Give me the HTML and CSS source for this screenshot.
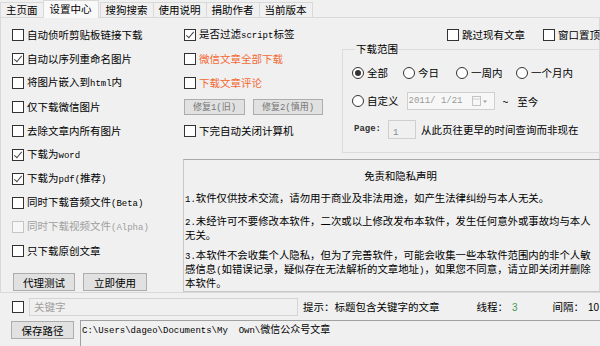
FILE: index.html
```html
<!DOCTYPE html>
<html lang="zh-CN">
<head>
    <meta charset="UTF-8">
    <title>设置中心</title>
    <link rel="stylesheet" href="styles.css">
</head>
<body>

    <div class="tabs">
        <span class="tab">主页面</span>
        <span class="tab active">设置中心</span>
        <span class="tab">搜狗搜索</span>
        <span class="tab">使用说明</span>
        <span class="tab">捐助作者</span>
        <span class="tab">当前版本</span>
    </div>

    <div class="panel">
        <!-- 左列 -->
        <div class="col-left">
            <label class="chk"><span class="box"></span><span>自动侦听剪贴板链接下载</span></label>
            <label class="chk"><span class="box on"></span><span>自动以序列重命名图片</span></label>
            <label class="chk"><span class="box"></span><span>将图片嵌入到<span class="en">html</span>内</span></label>
            <label class="chk"><span class="box"></span><span>仅下载微信图片</span></label>
            <label class="chk"><span class="box"></span><span>去除文章内所有图片</span></label>
            <label class="chk"><span class="box on"></span><span>下载为<span class="en">word</span></span></label>
            <label class="chk"><span class="box on"></span><span>下载为<span class="en">pdf(</span>推荐<span class="en">)</span></span></label>
            <label class="chk"><span class="box"></span><span>同时下载音频文件<span class="en">(Beta)</span></span></label>
            <label class="chk disabled"><span class="box"></span><span>同时下载视频文件<span class="en">(Alpha)</span></span></label>
            <label class="chk"><span class="box"></span><span>只下载原创文章</span></label>
            <div class="btn-row">
                <button class="btn-proxy">代理测试</button>
                <button class="btn-use">立即使用</button>
            </div>
        </div>

        <div class="col-right">
            <div class="upper">
                <!-- 中列 -->
                <div class="col-mid">
                    <label class="chk"><span class="box on"></span><span>是否过滤<span class="en">script</span>标签</span></label>
                    <label class="chk warn"><span class="box"></span><span>微信文章全部下载</span></label>
                    <label class="chk warn"><span class="box"></span><span>下载文章评论</span></label>
                    <div class="fix-row">
                        <button class="btn-fix1">修复<span class="en">1(</span>旧<span class="en">)</span></button>
                        <button class="btn-fix2">修复<span class="en">2(</span>慎用<span class="en">)</span></button>
                    </div>
                    <label class="chk"><span class="box"></span><span>下完自动关闭计算机</span></label>
                </div>

                <!-- 下载范围 -->
                <div class="col-range">
                    <div class="top-opts">
                        <label class="chk"><span class="box"></span><span>跳过现有文章</span></label>
                        <label class="chk"><span class="box"></span><span>窗口置顶</span></label>
                    </div>
                    <fieldset class="range">
                        <legend>下载范围</legend>
                        <div class="range-row">
                            <label class="rad"><span class="radio on"></span><span>全部</span></label>
                            <label class="rad"><span class="radio"></span><span>今日</span></label>
                            <label class="rad"><span class="radio"></span><span>一周内</span></label>
                            <label class="rad"><span class="radio"></span><span>一个月内</span></label>
                        </div>
                        <div class="range-row2">
                            <label class="rad"><span class="radio"></span><span>自定义</span></label>
                            <div class="date-box">
                                <span class="en">2011/ 1/21</span>
                                <svg class="cal" width="16" height="11" viewBox="0 0 16 11">
                                    <rect x="0.5" y="0.5" width="8" height="9" fill="#f7f7f7" stroke="#c4c4c4"/>
                                    <line x1="1" y1="3" x2="8" y2="3" stroke="#d0d0d0"/>
                                    <path d="M11 4.5 L15 4.5 L13 7 Z" fill="#a0a0a0"/>
                                </svg>
                            </div>
                            <span class="tilde">~</span>
                            <span class="until">至今</span>
                        </div>
                        <div class="range-row2">
                            <span class="page-label en">Page:</span>
                            <div class="page-box"><span class="en">1</span></div>
                            <span class="page-tip">从此页往更早的时间查询而非现在</span>
                        </div>
                    </fieldset>
                </div>
            </div>

            <div class="notice">
                <div class="notice-title">免责和隐私声明</div>
                <p><span class="en">1.</span>软件仅供技术交流，请勿用于商业及非法用途，如产生法律纠纷与本人无关。</p>
                <p><span class="en">2.</span>未经许可不要修改本软件，二次或以上修改发布本软件，发生任何意外或事故均与本人<br>无关。</p>
                <p><span class="en">3.</span>本软件不会收集个人隐私，但为了完善软件，可能会收集一些本软件范围内的非个人敏<br>感信息<span class="en">(</span>如错误记录，疑似存在无法解析的文章地址<span class="en">)</span>，如果您不同意，请立即关闭并删除<br>本软件。</p>
            </div>
        </div>
    </div>

    <div class="kw-row">
        <span class="box"></span>
        <div class="kw-input">关键字</div>
        <span class="kw-tip">提示：标题包含关键字的文章</span>
        <span class="stat">线程：<b class="num green">3</b></span>
        <span class="stat">间隔：<b class="num">10</b></span>
    </div>

    <div class="path-row">
        <button class="btn-path">保存路径</button>
        <div class="path-box"><span class="en">C:\Users\dageo\Documents\My&nbsp; Own\</span>微信公众号文章</div>
    </div>

</body>
</html>
```

FILE: styles.css
```css
* {
    box-sizing: border-box;
}
body {
    margin: 0;
    width: 600px;
    height: 346px;
    overflow: hidden;
    background: #f0f0f0;
    font-family: "Noto Sans CJK SC", sans-serif;
    font-size: 10.5px;
    color: #000;
}
.en {
    font-family: "Liberation Mono", "Noto Sans CJK SC", monospace;
    font-size: 9px;
}

/* 选项卡 */
.tabs {
    display: flex;
    align-items: flex-end;
    height: 17px;
}
.tab {
    height: 15px;
    line-height: 14px;
    padding: 0 5px;
    margin-right: -1px;
    border: 1px solid #d9d9d9;
    border-bottom: none;
    background: #f0f0f0;
    white-space: nowrap;
}
.tab.active {
    position: relative;
    z-index: 1;
    height: 18px;
    line-height: 16px;
    margin: 0 1px -1px 0;
    padding: 0 6px;
    background: #f9f9f9;
}

.panel {
    display: flex;
    height: 276px;
    padding: 5px 0 0 11px;
    border: 1px solid #d9d9d9;
    background: #f0f0f0;
}

/* 复选框 / 单选框 */
.chk, .rad {
    display: flex;
    align-items: center;
    height: 24px;
    line-height: 14px;
    white-space: nowrap;
}
.box {
    flex: none;
    position: relative;
    width: 12px;
    height: 12px;
    margin-right: 3px;
    border: 1px solid #333;
    background: #fff;
}
.box.on::after {
    content: "";
    position: absolute;
    left: 3px;
    top: 0;
    width: 3px;
    height: 7px;
    border: solid #444;
    border-width: 0 1px 1px 0;
    transform: rotate(40deg);
}
.chk.disabled {
    color: #a0a0a0;
}
.chk.disabled .box {
    border-color: #c5c5c5;
    background: #f7f7f7;
}
.chk.warn {
    color: #f26a35;
}
.radio {
    flex: none;
    position: relative;
    width: 12px;
    height: 12px;
    margin-right: 3px;
    border: 1px solid #333;
    border-radius: 50%;
    background: #fff;
}
.radio.on::after {
    content: "";
    position: absolute;
    left: 2px;
    top: 2px;
    width: 6px;
    height: 6px;
    border-radius: 50%;
    background: #333;
}

button {
    height: 18px;
    padding: 0;
    font: inherit;
    color: #000;
    background: #e1e1e1;
    border: 1px solid #adadad;
    white-space: nowrap;
}

.col-left {
    flex: none;
    width: 172px;
    display: flex;
    flex-direction: column;
}
.btn-row {
    display: flex;
    gap: 8px;
    margin-top: 10px;
    padding-left: 1px;
}
.btn-proxy {
    width: 62px;
}
.btn-use {
    width: 64px;
}

.col-right {
    flex: 1;
    min-width: 0;
    display: flex;
    flex-direction: column;
}
.upper {
    display: flex;
}
.col-mid {
    flex: none;
    width: 158px;
}
.fix-row {
    display: flex;
    align-items: center;
    gap: 8px;
    height: 24px;
}
.fix-row button {
    height: 16px;
    font-size: 9px;
    color: #777;
    line-height: 12px;
}
.btn-fix1 {
    width: 61px;
}
.btn-fix2 {
    width: 70px;
}

/* 下载范围 */
.col-range {
    flex: none;
    width: 280px;
}
.top-opts {
    display: flex;
    gap: 18px;
    height: 24px;
    padding-left: 105px;
}
.range {
    width: 280px;
    margin: -5px 0 0;
    padding: 3px 0 9px 9px;
    border: 1px solid #dcdcdc;
}
.range legend {
    margin-left: 3px;
    padding: 0 1px;
    line-height: 14px;
}
.range-row {
    display: grid;
    grid-template-columns: 51px 53px 60px auto;
    align-items: center;
    height: 28px;
}
.range-row2 {
    display: flex;
    align-items: center;
    height: 28px;
    white-space: nowrap;
}
.date-box {
    display: flex;
    align-items: center;
    justify-content: space-between;
    width: 88px;
    height: 18px;
    margin-left: 8px;
    padding: 0 6px 0 1px;
    border: 1px solid #cfcfcf;
    background: #f7f7f7;
    color: #9a9a9a;
}
.tilde {
    margin-left: 8px;
}
.until {
    margin-left: 9px;
}
.page-label {
    margin-left: 2px;
    font-weight: bold;
    color: #333;
}
.page-box {
    width: 28px;
    height: 19px;
    margin-left: 7px;
    padding: 2px 0 0 4px;
    border: 1px solid #cfcfcf;
    background: #f0f0f0;
    color: #8a8a8a;
}
.page-tip {
    margin-left: 5px;
}

/* 声明 */
.notice {
    width: 434px;
    height: 133px;
    margin: 6px 0 0 -1px;
    padding: 9px 0 0 1px;
    border: 1px solid #c8c8c8;
    border-top-color: #a9a9a9;
    font-size: 10.4px;
    line-height: 11px;
    white-space: nowrap;
}
.notice-title {
    text-align: center;
    line-height: 14px;
    margin-bottom: 9px;
}
.notice p {
    margin: 0 0 9px;
}

/* 底部 */
.kw-row {
    display: flex;
    align-items: center;
    height: 27px;
    padding-left: 12px;
    white-space: nowrap;
}
.kw-row .box {
    margin-right: 0;
}
.kw-input {
    width: 269px;
    height: 18px;
    margin-left: 5px;
    padding: 1px 0 0 4px;
    line-height: 14px;
    border: 1px solid #d4d4d4;
    background: #f0f0f0;
    color: #a0a0a0;
}
.kw-tip {
    margin-left: 5px;
}
.stat {
    margin-left: 37px;
}
.stat + .stat {
    margin-left: 35px;
}
.num {
    font-family: "Liberation Sans", sans-serif;
    font-weight: normal;
    font-size: 10px;
    margin-left: 4px;
}
.green {
    color: #3f9a5a;
}

.path-row {
    display: flex;
    padding-left: 11px;
    gap: 6px;
}
.btn-path {
    flex: none;
    width: 63px;
    margin-top: 1px;
}
.path-box {
    flex: 1;
    height: 30px;
    padding: 1px 0 0 1px;
    line-height: 14px;
    border: 1px solid #a0a0a0;
    border-right: none;
    white-space: nowrap;
    font-size: 10px;
}
```
